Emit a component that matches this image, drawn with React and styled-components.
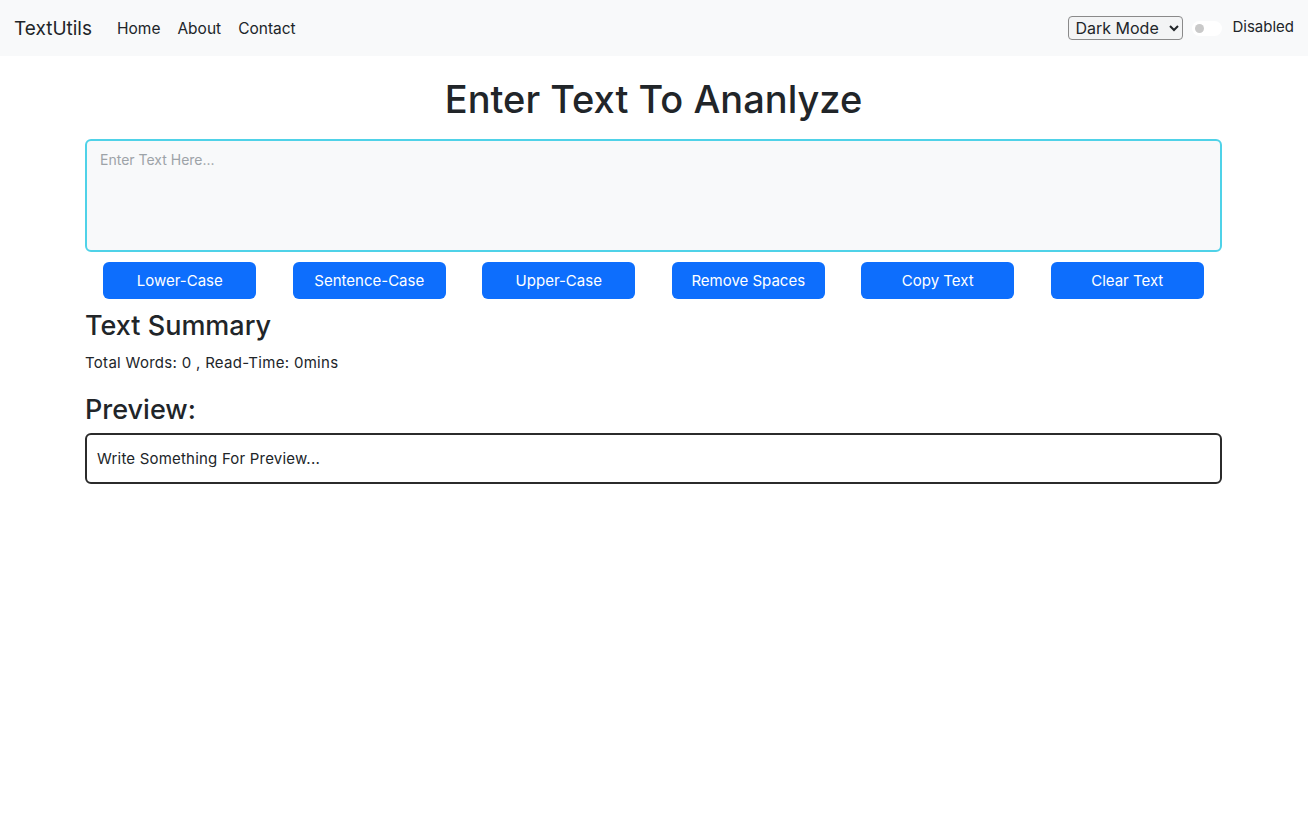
import React from "react";
import styled, { createGlobalStyle } from "styled-components";

const Global = createGlobalStyle`
  body {
    margin: 0;
    font-family: Inter, "Noto Sans", sans-serif;
    color: #212529;
    background: #fff;
  }
  * { box-sizing: border-box; }
`;

const Nav = styled.nav`
  height: 56px;
  background: #f8f9fa;
  display: flex;
  align-items: center;
  padding: 0 14px;
`;

const Brand = styled.span`
  font-size: 19px;
  margin-right: 25px;
`;

const NavLinks = styled.div`
  display: flex;
  gap: 17px;
  font-size: 15.5px;
`;

const NavLink = styled.a`
  color: #212529;
  text-decoration: none;
`;

const Right = styled.div`
  margin-left: auto;
  display: flex;
  align-items: center;
  gap: 9px;
  font-size: 15px;
`;

const Select = styled.select`
  font-family: inherit;
  font-size: 16px;
  height: 24px;
  width: 115px;
  padding: 0 2px;
  border: 1px solid #8a8a8a;
  border-radius: 4px;
  background: #f3f4f5;
  color: #212529;
`;

const Switch = styled.span`
  width: 30px;
  height: 15px;
  border-radius: 8px;
  background: #fff;
  display: flex;
  align-items: center;
  padding-left: 3px;
  &::before {
    content: "";
    width: 9px;
    height: 9px;
    border-radius: 50%;
    background: #c9c9c9;
  }
`;

const Label = styled.span`
  margin-left: 1px;
  margin-top: -3px;
  color: #212529;
`;

const Container = styled.main`
  width: 1137px;
  margin: 0 0 0 85px;
`;

const Title = styled.h1`
  margin: 21px 0 18px;
  font-size: 38px;
  font-weight: 500;
  text-align: center;
  line-height: 44px;
`;

const TextArea = styled.textarea`
  display: block;
  width: 100%;
  height: 113px;
  padding: 10px 13px;
  border: 2px solid #4fd2e8;
  border-radius: 6px;
  background: #f8f9fa;
  font-family: inherit;
  font-size: 14px;
  resize: none;
  outline: none;
  &::placeholder { color: #9da3a8; }
`;

const Buttons = styled.div`
  display: flex;
  justify-content: space-around;
  margin-top: 10px;
`;

const Button = styled.button`
  width: 153px;
  height: 37px;
  border: none;
  border-radius: 6px;
  background: #0d6efd;
  color: #fff;
  font-family: inherit;
  font-size: 15px;
`;

const Heading = styled.h2`
  margin: ${p => p.$top}px 0 0;
  font-size: 27px;
  font-weight: 500;
  line-height: 32px;
`;

const Summary = styled.p`
  margin: 11px 0 0;
  font-size: 15px;
  line-height: 20px;
  letter-spacing: 0.3px;
`;

const Preview = styled.div`
  margin-top: 7px;
  height: 51px;
  border: 2px solid #2b2b2b;
  border-radius: 6px;
  display: flex;
  align-items: center;
  padding: 0 10px;
  font-size: 15px;
  letter-spacing: 0.2px;
`;

export default function App() {
  const actions = ["Lower-Case", "Sentence-Case", "Upper-Case", "Remove Spaces", "Copy Text", "Clear Text"];
  return (
    <>
      <Global />
      <Nav>
        <Brand>TextUtils</Brand>
        <NavLinks>
          <NavLink href="#">Home</NavLink>
          <NavLink href="#">About</NavLink>
          <NavLink href="#">Contact</NavLink>
        </NavLinks>
        <Right>
          <Select defaultValue="dark">
            <option value="dark">Dark Mode</option>
          </Select>
          <Switch />
          <Label>Disabled</Label>
        </Right>
      </Nav>
      <Container>
        <Title>Enter Text To Ananlyze</Title>
        <TextArea placeholder="Enter Text Here..." />
        <Buttons>
          {actions.map(a => (
            <Button key={a}>{a}</Button>
          ))}
        </Buttons>
        <Heading $top={11}>Text Summary</Heading>
        <Summary>Total Words: 0 , Read-Time: 0mins</Summary>
        <Heading $top={21}>Preview:</Heading>
        <Preview>Write Something For Preview...</Preview>
      </Container>
    </>
  );
}
